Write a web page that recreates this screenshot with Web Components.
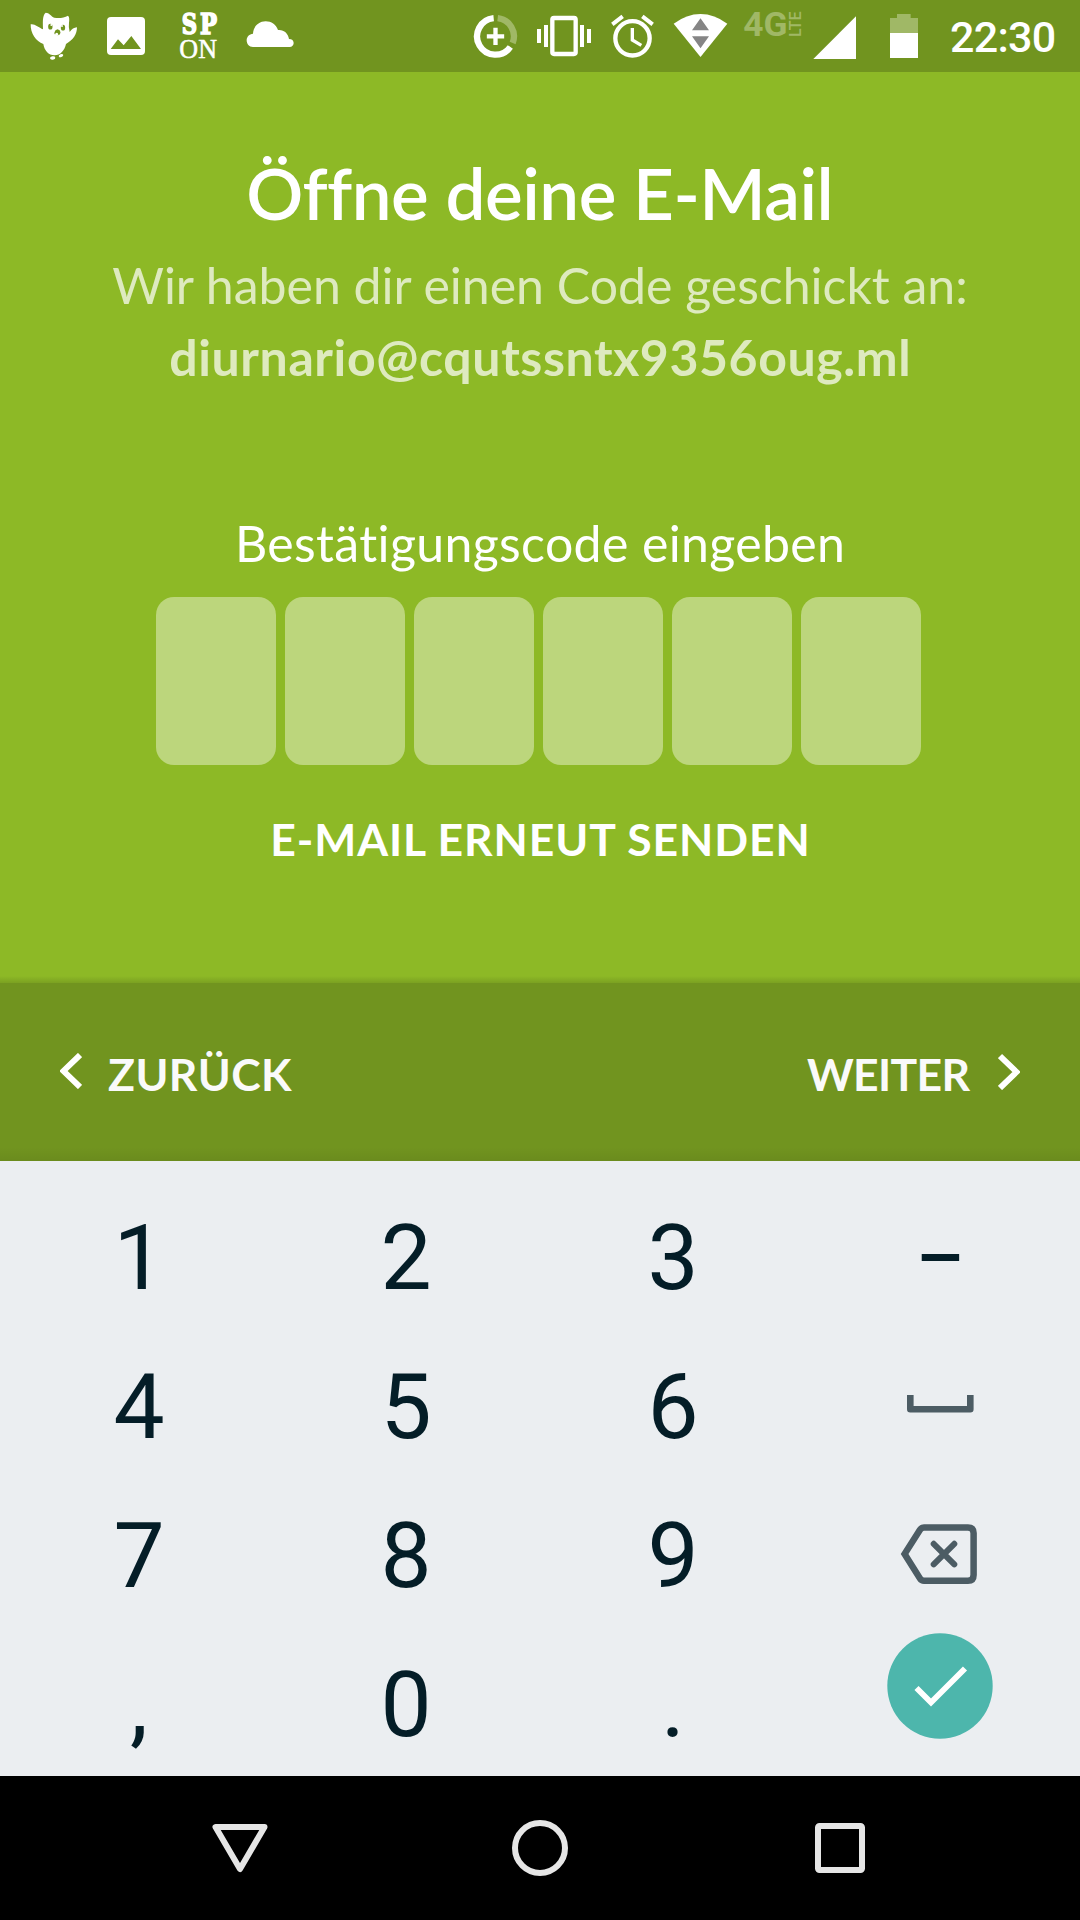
<!DOCTYPE html>
<html lang="de">
<head>
<meta charset="utf-8">
<title>E-Mail bestätigen</title>
<style>
html,body{margin:0;padding:0;width:1080px;height:1920px;overflow:hidden;background:#000}
</style>
</head>
<body>
<phone-screen></phone-screen>
<script>
function define(name, html, setup) {
  const tpl = document.createElement('template');
  tpl.innerHTML = html;
  customElements.define(name, class extends HTMLElement {
    constructor() {
      super();
      this.attachShadow({ mode: 'open' }).append(tpl.content.cloneNode(true));
    }
    connectedCallback() { if (setup) setup.call(this, this.shadowRoot); }
  });
}

/* One line of text, tracked so that its ink spans the `ink` width. */
define('text-line', `
<style>
:host{display:block;white-space:nowrap;font-family:Lato,"Open Sans",sans-serif;font-variant-ligatures:none}
span{display:inline-block}
</style><span><slot></slot></span>`, function (root) {
  const s = getComputedStyle(this), text = this.textContent.trim();
  const ctx = document.createElement('canvas').getContext('2d');
  ctx.font = `${s.fontWeight} ${s.fontSize} ${s.fontFamily}`;
  const m = ctx.measureText(text);
  const gap = (Number(this.getAttribute('ink')) - m.actualBoundingBoxLeft - m.actualBoundingBoxRight) / (text.length - 1);
  const span = root.querySelector('span');
  span.style.letterSpacing = gap.toFixed(3) + 'px';
  span.style.marginRight = (-gap).toFixed(3) + 'px';
});

define('icon-owl', `<style>:host{display:block;width:52px;height:72px}svg{display:block}</style>
<svg width="52" height="72" viewBox="84 0 156 216" fill="#fff">
<path d="M137 38C148 38 153 49 163 53C176 56 192 54 204 47C209 51 208 60 207 68Q205 82 209 96Q218 83 231 82C231 103 220 120 198 132C194 151 181 166 164 166C145 166 133 151 130 132C108 124 91 100 92 73C103 70 116 82 129 88C129 69 126 47 137 38Z"/>
<ellipse cx="158" cy="174" rx="8" ry="5" transform="rotate(-8 158 174)"/><ellipse cx="183" cy="167" rx="7" ry="4.5" transform="rotate(-20 183 167)"/>
<g fill="#71941f"><ellipse cx="151" cy="80" rx="6.5" ry="8.5"/><ellipse cx="189" cy="83" rx="6.5" ry="8.5"/><path d="M172 88Q181 90 181 97Q181 106 173 106Q163 105 163 99Q164 90 172 88Z"/></g>
<circle cx="154" cy="75" r="3"/><circle cx="186" cy="78" r="3"/><circle cx="170" cy="103" r="4.5"/></svg>`);

define('icon-image', `<style>:host{display:block;width:42px;height:72px}svg{display:block}</style>
<svg width="42" height="72" viewBox="315 0 126 216"><rect x="321" y="51" width="114" height="114" rx="12" fill="#fff"/><path d="M332 147L354 118L371 136L394 108L423 147Z" fill="#71941f"/></svg>`);

define('icon-spon', `<style>:host{display:block;width:40px;height:72px}svg{display:block;overflow:visible}</style>
<svg width="40" height="72" viewBox="534 0 120 216" fill="#fff">
<text x="545" y="103" font-family="DejaVu Serif, serif" font-weight="700" font-size="82" textLength="46" lengthAdjust="spacingAndGlyphs" stroke="#fff" stroke-width="5">S</text>
<text x="600" y="103" font-family="DejaVu Serif, serif" font-weight="700" font-size="82" textLength="51" lengthAdjust="spacingAndGlyphs" stroke="#fff" stroke-width="5">P</text>
<text x="538" y="175" font-family="Liberation Serif" font-size="79" textLength="113" lengthAdjust="spacingAndGlyphs" stroke="#fff" stroke-width="1.500">ON</text></svg>`);

define('icon-cloud', `<style>:host{display:block;width:50px;height:72px}svg{display:block}</style>
<svg width="50" height="72" viewBox="735 0 150 216" fill="#fff"><path d="M759 141C747 141 740 132 740 121C740 110 748 102 759 101C760 80 776 64 797 64C814 64 828 74 834 90C851 88 865 100 867 117C876 117 881 122 881 129C881 136 876 141 869 141Z"/></svg>`);

define('icon-saver', `<style>:host{display:block;width:47px;height:72px}svg{display:block}</style>
<svg width="47" height="72" viewBox="66 0 141 216" fill="none"><path d="M131 54.3A55 55 0 1 0 181 141" stroke="#fff" stroke-width="19"/><path d="M143 54.3A55 55 0 0 1 188 129" stroke="#a0b866" stroke-width="19"/><path d="M136.500 83v52M110.500 109h52" stroke="#fff" stroke-width="13"/></svg>`);

define('icon-vibrate', `<style>:host{display:block;width:58px;height:72px}svg{display:block}</style>
<svg width="58" height="72" viewBox="255 0 174 216" fill="#fff"><rect x="307" y="54" width="70" height="108" rx="5" fill="none" stroke="#fff" stroke-width="13"/><path d="M261 87h12v42h-12zM282 75h12v66h-12zM390 75h12v66h-12zM411 87h12v42h-12z"/></svg>`);

define('icon-alarm', `<style>:host{display:block;width:45px;height:72px}svg{display:block}</style>
<svg width="45" height="72" viewBox="480 0 135 216" fill="none" stroke="#fff"><circle cx="547.500" cy="115" r="51.500" stroke-width="13"/><path d="M547 84V120L574 136" stroke-width="10"/><path d="M487 73L518 49M577 49L608 73" stroke-width="12"/></svg>`);

define('icon-wifi', `<style>:host{display:block;width:57px;height:72px}svg{display:block}</style>
<svg width="57" height="72" viewBox="666 0 171 216"><path d="M751.500 171L671 71Q710 42 751.500 42Q793 42 832 71Z" fill="#fff"/><path d="M751.500 55L777 91H726ZM726 109H777L751.500 145Z" fill="#858585"/></svg>`);

define('icon-network', `<style>:host{display:block;width:61px;height:72px}svg{display:block;overflow:visible}</style>
<svg width="61" height="72" viewBox="36 0 183 216" fill="#a0b866" font-family="Roboto"><text x="40" y="108" font-size="101" font-weight="700" textLength="133" lengthAdjust="spacingAndGlyphs">4G</text><text transform="translate(213 111) rotate(-90)" font-size="50" font-weight="500" textLength="77" lengthAdjust="spacingAndGlyphs">LTE</text></svg>`);

define('icon-signal', `<style>:host{display:block;width:46px;height:72px}svg{display:block}</style>
<svg width="46" height="72" viewBox="246 0 138 216"><path d="M250 177L378 49V177Z" fill="#fff"/></svg>`);

define('icon-battery', `<style>:host{display:block;width:32px;height:72px}svg{display:block}</style>
<svg width="32" height="72" viewBox="474 0 96 216"><path d="M480 54H501V42H542V54H564V99H480Z" fill="#a0b866"/><path d="M480 99H564V174H480Z" fill="#fff"/></svg>`);

define('status-bar', `
<style>
:host{display:flex;width:1080px;height:72px;background:#71941f;color:#fff;box-sizing:border-box;padding:0 23px 0 28px}
.notes,.system{display:flex}
.system{margin-left:auto}
.notes icon-image{margin-left:25px}.notes icon-spon{margin-left:31px}.notes icon-cloud{margin-left:27px}
icon-vibrate{margin-left:16px}icon-alarm{margin-left:17px}icon-wifi{margin-left:17px}
icon-network{margin-left:13px}icon-signal{margin-left:9px}icon-battery{margin-left:30px}
text-line{width:107px;margin-left:30px;font:500 43px/72px Roboto,sans-serif;padding-top:1px;height:71px}
</style>
<div class="notes"><icon-owl></icon-owl><icon-image></icon-image><icon-spon></icon-spon><icon-cloud></icon-cloud></div>
<div class="system"><icon-saver></icon-saver><icon-vibrate></icon-vibrate><icon-alarm></icon-alarm><icon-wifi></icon-wifi><icon-network></icon-network><icon-signal></icon-signal><icon-battery></icon-battery><text-line ink="103.7">22:30</text-line></div>`);

define('code-cell', `<style>:host{display:block;width:120px;height:168px;border-radius:18px;background:#bcd67c}</style>`);

define('code-input', `<style>:host{display:flex;gap:9px;width:765px;margin-left:156px}</style>
<code-cell></code-cell><code-cell></code-cell><code-cell></code-cell><code-cell></code-cell><code-cell></code-cell><code-cell></code-cell>`);

define('verify-panel', `
<style>
:host{display:block;box-sizing:border-box;width:1080px;height:911px;padding-top:79px;text-align:center;color:#fff;
 background:linear-gradient(to top,rgba(0,0,0,.13),rgba(0,0,0,0) 7px),#8db926}
.title{font-size:71px;line-height:84px;font-weight:600}
.info{margin-top:20px;font-size:50px;line-height:60px;color:#deeabf;font-weight:400}
.mail{margin-top:12px;font-size:50px;line-height:60px;color:#deeabf;font-weight:700}
.label{margin-top:126px;font-size:50px;line-height:60px;font-weight:400}
code-input{margin-top:24px}
.resend{margin-top:47px;font-size:44.5px;line-height:54px;font-weight:700}
</style>
<text-line class="title" ink="579">Öffne deine E-Mail</text-line>
<text-line class="info" ink="855">Wir haben dir einen Code geschickt an:</text-line>
<text-line class="mail" ink="738">diurnario@cqutssntx9356oug.ml</text-line>
<text-line class="label" ink="604">Bestätigungscode eingeben</text-line>
<code-input></code-input>
<text-line class="resend" ink="536">E-MAIL ERNEUT SENDEN</text-line>`);

define('step-bar', `
<style>
:host{display:flex;justify-content:space-between;align-items:flex-start;box-sizing:border-box;width:1080px;height:178px;padding:63px 60px 0;color:#fafafa;
 background:linear-gradient(to top,rgba(0,0,0,.06),rgba(0,0,0,0) 14px),#71941f}
div{display:flex}
text-line{font-size:44.5px;line-height:54px;font-weight:700;padding-top:1px}
.back text-line{margin-left:26px}
.next text-line{margin-right:28px}
svg{display:block;margin-top:7px}
</style>
<div class="back"><svg width="22" height="36" viewBox="0 0 22 36"><path d="M20 2L3.500 18L20 34" fill="none" stroke="#fff" stroke-width="5.900"/></svg><text-line ink="184">ZURÜCK</text-line></div>
<div class="next"><text-line ink="163.5">WEITER</text-line><svg width="22" height="37" viewBox="0 0 22 37"><path d="M2 3L18.500 19L2 35" fill="none" stroke="#fff" stroke-width="5.900"/></svg></div>`);

define('pad-key', `<style>:host{display:flex;justify-content:center;height:149px;font:400 91px/151px Roboto,sans-serif;color:#041d27}:host([dash]){font-size:75px;font-weight:500}::slotted(svg){display:block}</style><slot></slot>`);

define('number-pad', `
<style>
:host{display:grid;grid-template-columns:repeat(4,267px);grid-auto-rows:149px;box-sizing:border-box;width:1080px;height:615px;padding:22px 0 0 5.500px;background:#ebeef1}
</style>
<pad-key>1</pad-key><pad-key>2</pad-key><pad-key>3</pad-key><pad-key dash>–</pad-key>
<pad-key>4</pad-key><pad-key>5</pad-key><pad-key>6</pad-key>
<pad-key><svg width="120" height="149" viewBox="880 1332 120 149"><path d="M910.300 1395V1409.200H970.300V1395" fill="none" stroke="#4c5c64" stroke-width="6.600" stroke-linejoin="round"/></svg></pad-key>
<pad-key>7</pad-key><pad-key>8</pad-key><pad-key>9</pad-key>
<pad-key><svg width="120" height="149" viewBox="880 1481 120 149"><g fill="none" stroke="#4c5c64" stroke-width="6.500"><path d="M924 1527.400H968Q973.600 1527.400 973.600 1533V1575Q973.600 1580.800 968 1580.800H924Q921.500 1580.800 920 1578.500L904.600 1554L920 1529.700Q921.500 1527.400 924 1527.400Z"/><path d="M933.700 1543.800L954.300 1564.400M954.300 1543.800L933.700 1564.400" stroke-linecap="round" stroke-width="6"/></g></svg></pad-key>
<pad-key>,</pad-key><pad-key>0</pad-key><pad-key>.</pad-key>
<pad-key><svg width="120" height="149" viewBox="880 1630 120 149"><circle cx="940" cy="1686" r="52.700" fill="#4db6ac"/><path d="M916.500 1688L931 1702.500L965 1668.500" fill="none" stroke="#fff" stroke-width="5.800"/></svg></pad-key>`);

define('nav-bar', `
<style>:host{display:flex;justify-content:space-between;align-items:center;box-sizing:border-box;width:1080px;height:144px;padding:0 210px;background:#000}svg{display:block}</style>
<svg width="60" height="60" viewBox="0 0 60 60" fill="none" stroke="#e6e6e6" stroke-width="6" stroke-linejoin="round"><path d="M5.500 9H54.500L30 51Z"/></svg>
<svg width="60" height="60" viewBox="0 0 60 60" fill="none" stroke="#e6e6e6" stroke-width="6"><circle cx="30" cy="30" r="25"/></svg>
<svg width="60" height="60" viewBox="0 0 60 60" fill="none" stroke="#e6e6e6" stroke-width="6"><rect x="8" y="8" width="44" height="44" rx="1.500"/></svg>`);

define('phone-screen', `<style>:host{display:flex;flex-direction:column;width:1080px;height:1920px;overflow:hidden}</style>
<status-bar></status-bar><verify-panel></verify-panel><step-bar></step-bar><number-pad></number-pad><nav-bar></nav-bar>`);
</script>
</body>
</html>
